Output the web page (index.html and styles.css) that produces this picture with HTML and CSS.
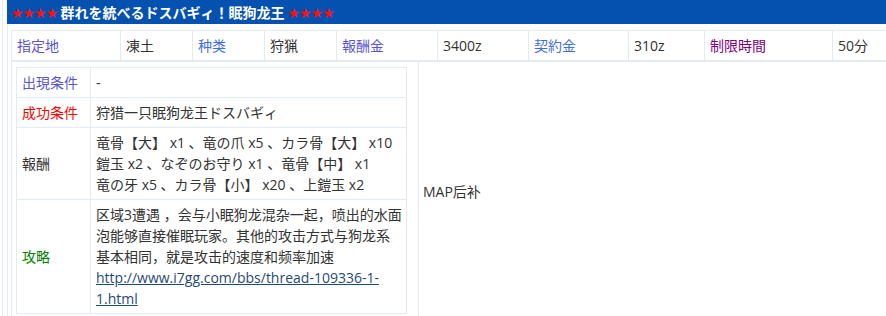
FILE: index.html
```html
<!DOCTYPE html>
<html lang="ja">
<head>
<meta charset="utf-8">
<link rel="stylesheet" href="styles.css">
</head>
<body>
<div class="page">
  <div class="title"><span class="stars">★★★★</span> 群れを統べるドスバギィ！眠狗龙王 <span class="stars">★★★★</span></div>
  <div class="panel">
    <table class="summary">
      <colgroup>
        <col class="c1"><col class="c2"><col class="c3"><col class="c4"><col class="c5"><col class="c6"><col class="c7"><col class="c8"><col class="c9"><col class="c10">
      </colgroup>
      <tr>
        <td class="k-slate">指定地</td><td>凍土</td>
        <td class="k-royal">种类</td><td>狩猟</td>
        <td class="k-slate">報酬金</td><td>3400z</td>
        <td class="k-royal">契約金</td><td>310z</td>
        <td class="k-purple">制限時間</td><td>50分</td>
      </tr>
    </table>
    <div class="detail">
      <div class="detail-left">
        <table class="info">
          <tr><td class="lbl k-slate">出現条件</td><td>-</td></tr>
          <tr><td class="lbl k-red">成功条件</td><td>狩猎一只眠狗龙王ドスバギィ</td></tr>
          <tr><td class="lbl">報酬</td><td class="lines">竜骨【大】 x1 、竜の爪 x5 、カラ骨【大】 x10<br>鎧玉 x2 、なぞのお守り x1 、竜骨【中】 x1<br>竜の牙 x5 、カラ骨【小】 x20 、上鎧玉 x2</td></tr>
          <tr><td class="lbl k-green">攻略</td><td class="lines">区域3遭遇 ，会与小眠狗龙混杂一起，喷出的水面<br>泡能够直接催眠玩家。其他的攻击方式与狗龙系<br>基本相同，就是攻击的速度和频率加速<br><a href="#">http://www.i7gg.com/bbs/thread-109336-1-<br>1.html</a></td></tr>
        </table>
      </div>
      <div class="detail-map">MAP后补</div>
    </div>
  </div>
</div>
</body>
</html>
```
FILE: styles.css
```css
html, body {
  margin: 0;
  padding: 0;
  overflow: hidden;
  background: #fff;
}
body {
  font-family: "Open Sans", "Noto Sans CJK SC", sans-serif;
  font-size: 14px;
  color: #333;
}
.page {
  margin-left: 2px;
  border-left: 1px solid #e6ecf2;
  padding-left: 4px;
  width: 920px;
  height: 330px;
}
.title {
  background: #0551b0;
  color: #fff;
  font-weight: bold;
  height: 24px;
  line-height: 24px;
  padding-left: 4px;
  font-family: "Noto Sans CJK JP", sans-serif;
}
.stars {
  color: #ff1010;
  font-family: "DejaVu Sans", sans-serif;
  font-size: 14px;
  font-weight: normal;
  letter-spacing: -1px;
}
.panel {
  border-left: 1px solid #e6ecf2;
  padding-left: 3px;
  padding-top: 6px;
}
table {
  border-collapse: collapse;
}
td {
  border: 1px solid #e2eaf2;
  padding: 4px 5px;
  line-height: 21px;
  vertical-align: middle;
}
.summary {
  table-layout: fixed;
  width: 960px;
}
.summary td {
  border-bottom: 2px solid #e2eaf2;
  white-space: nowrap;
}
.c1 { width: 109px; }
.c2 { width: 72px; }
.c3 { width: 72px; }
.c4 { width: 72px; }
.c5 { width: 101px; }
.c6 { width: 91px; }
.c7 { width: 100px; }
.c8 { width: 76px; }
.c9 { width: 128px; }
.c10 { width: 139px; }
.detail {
  display: flex;
  border-left: 1px solid #e2eaf2;
}
.detail-left {
  width: 402px;
  padding: 5px 0 5px 4px;
}
.info {
  width: 391px;
  table-layout: fixed;
}
.info .lbl {
  width: 63px;
}
.info .lines {
  white-space: nowrap;
  overflow: hidden;
}
.detail-map {
  flex: 1;
  border-left: 1px solid #e2eaf2;
  display: flex;
  align-items: center;
  padding-left: 4px;
}
.k-slate { color: #5a55d6; }
.k-royal { color: #3f6fe0; }
.k-purple { color: #800080; }
.k-red { color: #ff0000; }
.k-green { color: #008000; }
a {
  color: #1f4a78;
  text-decoration: underline;
}
```
